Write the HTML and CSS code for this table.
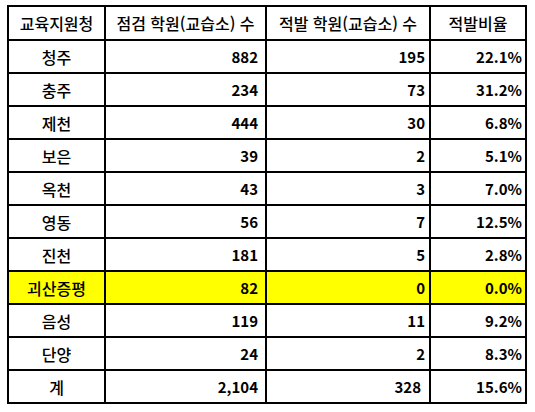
FILE: index.html
```html
<!DOCTYPE html>
<html lang="ko">
<head>
    <meta charset="UTF-8">
    <meta name="viewport" content="width=device-width, initial-scale=1.0">
    <title>교육지원청별 학원 점검 현황</title>
    <link rel="stylesheet" href="styles.css">
</head>
<body>
    <table class="stats">
        <colgroup>
            <col class="col-office">
            <col class="col-checked">
            <col class="col-caught">
            <col class="col-rate">
        </colgroup>
        <tr class="head">
            <th>교육지원청</th>
            <th>점검 학원(교습소) 수</th>
            <th>적발 학원(교습소) 수</th>
            <th>적발비율</th>
        </tr>
        <tr>
            <td class="name">청주</td>
            <td class="num">882</td>
            <td class="num n3">195</td>
            <td class="num n4">22.1%</td>
        </tr>
        <tr>
            <td class="name">충주</td>
            <td class="num">234</td>
            <td class="num n3">73</td>
            <td class="num n4">31.2%</td>
        </tr>
        <tr>
            <td class="name">제천</td>
            <td class="num">444</td>
            <td class="num n3">30</td>
            <td class="num n4">6.8%</td>
        </tr>
        <tr>
            <td class="name">보은</td>
            <td class="num">39</td>
            <td class="num n3">2</td>
            <td class="num n4">5.1%</td>
        </tr>
        <tr>
            <td class="name">옥천</td>
            <td class="num">43</td>
            <td class="num n3">3</td>
            <td class="num n4">7.0%</td>
        </tr>
        <tr>
            <td class="name">영동</td>
            <td class="num">56</td>
            <td class="num n3">7</td>
            <td class="num n4">12.5%</td>
        </tr>
        <tr>
            <td class="name">진천</td>
            <td class="num">181</td>
            <td class="num n3">5</td>
            <td class="num n4">2.8%</td>
        </tr>
        <tr class="highlight">
            <td class="name">괴산증평</td>
            <td class="num">82</td>
            <td class="num n3">0</td>
            <td class="num n4">0.0%</td>
        </tr>
        <tr>
            <td class="name">음성</td>
            <td class="num">119</td>
            <td class="num n3">11</td>
            <td class="num n4">9.2%</td>
        </tr>
        <tr>
            <td class="name">단양</td>
            <td class="num">24</td>
            <td class="num n3">2</td>
            <td class="num n4">8.3%</td>
        </tr>
        <tr class="total">
            <td class="name">계</td>
            <td class="num">2,104</td>
            <td class="num n3">328</td>
            <td class="num n4">15.6%</td>
        </tr>
    </table>
</body>
</html>
```

FILE: styles.css
```css
body {
    margin: 0;
    padding: 5px 0 0 7px;
    background-color: #ffffff;
    font-family: "Noto Sans CJK KR", "Noto Sans", sans-serif;
    font-size: 16px;
    color: #000;
}
.stats {
    border-collapse: collapse;
    table-layout: fixed;
    width: 518px;
}
.col-office {
    width: 97px;
}
.col-checked {
    width: 161px;
}
.col-caught {
    width: 164px;
}
.col-rate {
    width: 96px;
}
th, td {
    border: 2px solid #000;
    height: 33px;
    padding: 0;
    line-height: 1;
    box-sizing: border-box;
}
th {
    font-weight: 500;
    text-align: center;
}
.head th {
    height: 34px;
}
.name {
    text-align: center;
    font-weight: 500;
}
.num {
    text-align: right;
    font-size: 15px;
    font-weight: 700;
    padding-right: 7px;
}
.num.n3 {
    padding-right: 4px;
}
.num.n4 {
    padding-right: 3px;
}
.total .num.n3 {
    padding-right: 8px;
}
.highlight td {
    background-color: #ffff00;
}
```
